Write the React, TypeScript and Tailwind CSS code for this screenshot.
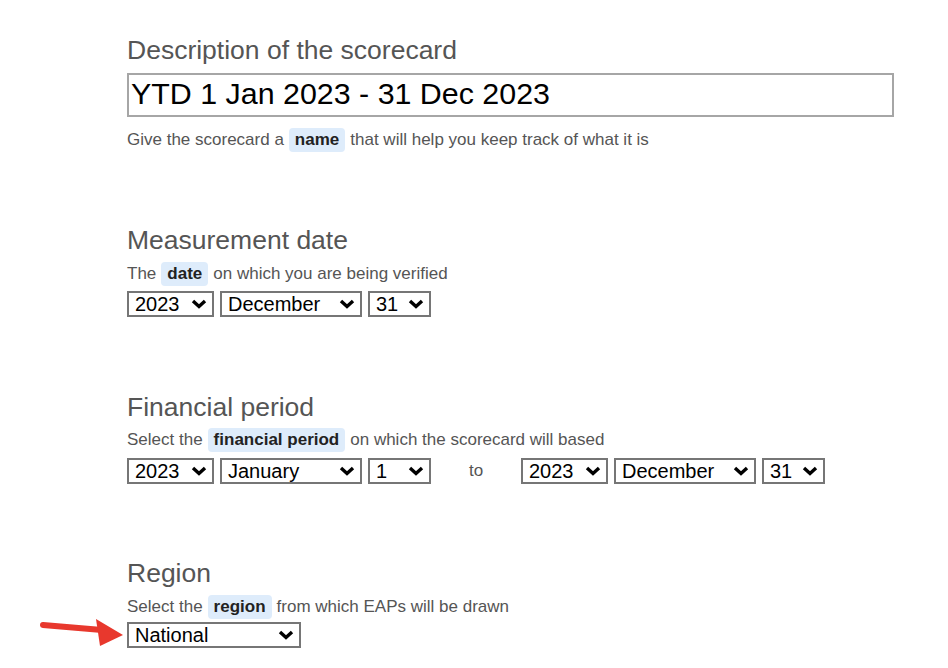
import React from "react";

const font = { fontFamily: '"Liberation Sans", Arial, sans-serif' };

const Chevron = () => (
  <svg width="16" height="10" viewBox="0 0 16 10" className="shrink-0">
    <path d="M2 2 L8 7.5 L14 2" fill="none" stroke="#000" strokeWidth="3.4" />
  </svg>
);

type SelectProps = { value: string; width: string };

const FakeSelect = ({ value, width }: SelectProps) => (
  <div
    className={`${width} h-[26px] flex items-center justify-between border-2 border-[#767676] bg-white pl-[6px] pr-[5px] text-[20px] leading-none text-black`}
  >
    <span>{value}</span>
    <Chevron />
  </div>
);

const Pill = ({ children }: { children: React.ReactNode }) => (
  <span className="mx-[5px] px-[6px] h-[24px] flex items-center rounded-[4px] bg-[#deecfb] font-bold text-[#222]">
    {children}
  </span>
);

const Heading = ({ children }: { children: React.ReactNode }) => (
  <h2 className="h-[28px] text-[26.5px] leading-[28px] text-[#555]">{children}</h2>
);

const Help = ({ children }: { children: React.ReactNode }) => (
  <div className="h-[24px] flex items-center text-[17px] text-[#555] whitespace-pre">{children}</div>
);

const DateRow = ({ year, month, day }: { year: string; month: string; day: string }) => (
  <div className="flex gap-[6px]">
    <FakeSelect value={year} width="w-[87px]" />
    <FakeSelect value={month} width="w-[142px]" />
    <FakeSelect value={day} width="w-[63px]" />
  </div>
);

export default function App() {
  return (
    <div className="relative w-[948px] h-[668px] bg-white overflow-hidden" style={font}>
      <div className="pl-[127px] pt-[36px] flex flex-col">
        <Heading>Description of the scorecard</Heading>
        <div className="mt-[9px] w-[767px] h-[44px] border-2 border-[#a6a6a6] flex items-center pl-[2px] pb-[3px] text-[30.4px] text-black">
          YTD 1 Jan 2023 - 31 Dec 2023
        </div>
        <div className="mt-[11px]">
          <Help>
            <span>Give the scorecard a</span>
            <Pill>name</Pill>
            <span>that will help you keep track of what it is</span>
          </Help>
        </div>

        <div className="mt-[74px]">
          <Heading>Measurement date</Heading>
        </div>
        <div className="mt-[8px]">
          <Help>
            <span>The</span>
            <Pill>date</Pill>
            <span>on which you are being verified</span>
          </Help>
        </div>
        <div className="mt-[5px]">
          <DateRow year="2023" month="December" day="31" />
        </div>

        <div className="mt-[76px]">
          <Heading>Financial period</Heading>
        </div>
        <div className="mt-[7px]">
          <Help>
            <span>Select the</span>
            <Pill>financial period</Pill>
            <span>on which the scorecard will based</span>
          </Help>
        </div>
        <div className="mt-[6px] flex items-center">
          <DateRow year="2023" month="January" day="1" />
          <span className="w-[90px] text-center text-[17px] text-[#555]">to</span>
          <DateRow year="2023" month="December" day="31" />
        </div>

        <div className="mt-[75px]">
          <Heading>Region</Heading>
        </div>
        <div className="mt-[8px]">
          <Help>
            <span>Select the</span>
            <Pill>region</Pill>
            <span>from which EAPs will be drawn</span>
          </Help>
        </div>
        <div className="mt-[3px] flex items-center">
          <FakeSelect value="National" width="w-[174px]" />
        </div>
      </div>

      {/* red pointer arrow */}
      <svg className="absolute left-[40px] top-[615px]" width="86" height="38" viewBox="0 0 86 38">
        <path d="M3 10 L62 15" stroke="#e8382d" strokeWidth="6" strokeLinecap="round" />
        <polygon points="56,4 83,20 60,31" fill="#e8382d" />
      </svg>
    </div>
  );
}
